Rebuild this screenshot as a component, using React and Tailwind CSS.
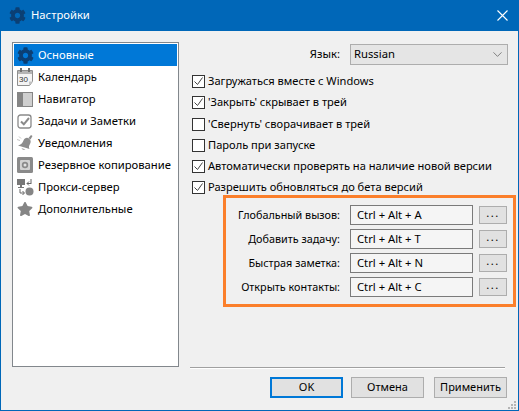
import React from "react";
import { FaCog, FaStar } from "react-icons/fa";
import { ChevronDown } from "lucide-react";

const CalendarIcon = () => (
  <svg width="16" height="18" viewBox="0 0 16 18">
    <path d="M0.5 2.5h15v11l-3 4H0.5z" fill="#f4f4f4" stroke="#8f8f8f" />
    <rect x="1" y="3" width="14" height="3" fill="#b5b5b5" />
    <rect x="3" y="0" width="2" height="4" fill="#6f6f6f" />
    <rect x="11" y="0" width="2" height="4" fill="#6f6f6f" />
    <text x="2" y="14" fontSize="8" fontFamily="Liberation Sans, sans-serif" fill="#333">30</text>
    <path d="M12 17.5v-4h3.5z" fill="#c4c4c4" />
  </svg>
);

const NavigatorIcon = () => (
  <svg width="16" height="15" viewBox="0 0 16 15">
    <rect width="16" height="15" fill="#858585" />
    <rect x="6" y="1" width="9" height="13" fill="#cfcfcf" />
  </svg>
);

const TasksIcon = () => (
  <svg width="16" height="16" viewBox="0 0 16 16">
    <rect x="1" y="2" width="13" height="13" rx="2.5" fill="#fff" stroke="#8a8a8a" strokeWidth="1.3" />
    <path d="M4 8.5l2.8 2.8L12 5" fill="none" stroke="#8a8a8a" strokeWidth="2" />
  </svg>
);

const BellIcon = () => (
  <svg width="16" height="16" viewBox="0 0 16 16">
    <path d="M1 10.5c3-.5 4.5-2.500 5.500-5C7.500 3 10 2 12 3.500c2 1.500 2 3.500 1 5.500-1 1.800-1.500 3.500-.5 5z" fill="#8c8c8c" />
    <path d="M11.500 3l2.500-3 1.500 1-2 3.500z" fill="#8c8c8c" />
    <path d="M4.500 13c.5 2 2.500 2.500 4 1.500z" fill="#a8a8a8" />
    <path d="M0 4.500l3 1M2 1.500l2 2" stroke="#c4c4c4" />
  </svg>
);

const BackupIcon = () => (
  <svg width="16" height="16" viewBox="0 0 16 16">
    <rect width="16" height="16" rx="1.500" fill="#8a8a8a" />
    <rect x="3" y="3" width="10" height="10" rx="1" fill="#d2d2d2" />
    <circle cx="8" cy="8" r="3.200" fill="#8a8a8a" />
    <circle cx="8" cy="8" r="1.500" fill="#e2e2e2" />
  </svg>
);

const ProxyIcon = () => (
  <svg width="17" height="17" viewBox="0 0 17 17">
    <rect x="0" y="0" width="8" height="6" fill="#777" />
    <rect x="3" y="6" width="2" height="2" fill="#777" />
    <rect x="1" y="8" width="6" height="1" fill="#777" />
    <circle cx="12.500" cy="12.500" r="4" fill="#858585" />
    <path d="M14 0v5M14 4.500H10M12 2.500l-2 2 2 2M3 10v4h4M5.500 12l2 2-2 2" fill="none" stroke="#666" />
  </svg>
);

const items = [
  { label: "Основные", icon: <FaCog size={17} color="#0b3f74" />, active: true },
  { label: "Календарь", icon: <CalendarIcon /> },
  { label: "Навигатор", icon: <NavigatorIcon /> },
  { label: "Задачи и Заметки", icon: <TasksIcon /> },
  { label: "Уведомления", icon: <BellIcon /> },
  { label: "Резервное копирование", icon: <BackupIcon /> },
  { label: "Прокси-сервер", icon: <ProxyIcon /> },
  { label: "Дополнительные", icon: <FaStar size={16} color="#858585" /> },
];

const options = [
  { label: "Загружаться вместе с Windows", checked: true, h: "h-[21px]" },
  { label: "'Закрыть' скрывает в трей", checked: true, h: "h-[21px]" },
  { label: "'Свернуть' сворачивает в трей", checked: false, h: "h-[22px]" },
  { label: "Пароль при запуске", checked: false, h: "h-[21px]" },
  { label: "Автоматически проверять на наличие новой версии", checked: true, h: "h-[21px]" },
  { label: "Разрешить обновляться до бета версий", checked: true, h: "h-[21px]" },
];

const hotkeys = [
  { label: "Глобальный вызов:", keys: "Ctrl + Alt + A" },
  { label: "Добавить задачу:", keys: "Ctrl + Alt + T" },
  { label: "Быстрая заметка:", keys: "Ctrl + Alt + N" },
  { label: "Открыть контакты:", keys: "Ctrl + Alt + C" },
];

const Checkbox = ({ checked }) => (
  <span className="w-[13px] h-[13px] border border-[#333] bg-white flex items-center justify-center shrink-0">
    {checked && (
      <svg width="11" height="11" viewBox="0 0 11 11">
        <path d="M1.500 5.500l3 3 5-7" fill="none" stroke="#444" strokeWidth="1" />
      </svg>
    )}
  </span>
);

const DialogButton = ({ children, primary, className = "" }) => (
  <button
    className={
      "h-[21px] w-[73px] bg-[#e1e1e1] text-black text-[11px] " +
      (primary ? "border-2 border-[#0078d7] " : "border border-[#adadad] ") +
      className
    }
  >
    {children}
  </button>
);

export default function App() {
  return (
    <div
      className="relative w-[519px] h-[411px] flex flex-col bg-[#f0f0f0] border border-[#0067b8] border-t-0 text-[11.25px] text-black overflow-hidden"
      style={{ fontFamily: '"Noto Sans", "DejaVu Sans", sans-serif' }}
    >
      <div className="h-[31px] shrink-0 bg-[#0067b8] flex items-center pl-[8px] pr-[10px] text-white">
        <FaCog size={17} color="#0b3f74" />
        <span className="ml-[5px]">Настройки</span>
        <svg className="ml-auto" width="11" height="11" viewBox="0 0 11 11">
          <path d="M0.500 0.500l10 10M10.500 0.500l-10 10" stroke="#fff" strokeWidth="1.100" />
        </svg>
      </div>

      <div className="flex-1 flex pl-[11px] pt-[11px] pr-[10px] min-h-0">
        <div className="w-[167px] h-[325px] shrink-0 bg-white border border-[#82878c] p-[1px]">
          {items.map((item) => (
            <div
              key={item.label}
              className={"h-[22px] flex items-center " + (item.active ? "bg-[#0078d7] text-white" : "text-black")}
            >
              <span className="w-[22px] mr-[2px] flex items-center justify-center shrink-0">{item.icon}</span>
              <span className="whitespace-nowrap">{item.label}</span>
            </div>
          ))}
        </div>

        <div className="flex-1 flex flex-col pl-[13px] min-w-0">
          <div className="flex items-center justify-end pt-[2px] pb-[6px]">
            <span>Язык:</span>
            <div className="w-[158px] h-[21px] ml-[10px] bg-[#e5e5e5] border border-[#adadad] flex items-center justify-between pl-[3px] pr-[2px]">
              <span>Russian</span>
              <ChevronDown size={15} strokeWidth={1} color="#444" />
            </div>
          </div>

          {options.map((opt) => (
            <div key={opt.label} className={"flex items-center gap-[3px] whitespace-nowrap text-[11.1px] " + opt.h}>
              <Checkbox checked={opt.checked} />
              <span>{opt.label}</span>
            </div>
          ))}

          <div className="mt-[-3px] ml-[31px] mr-[-8px] h-[112px] border-[3px] border-[#fb7f2b] pt-[7px] flex flex-col gap-[4px]">
            {hotkeys.map((row) => (
              <div key={row.label} className="flex items-center h-[20px]">
                <span className="w-[114px] text-right whitespace-nowrap text-[10.8px]">{row.label}</span>
                <div className="w-[123px] h-[20px] ml-[10px] bg-[#f5f5f5] border border-[#7a7a7a] flex items-center pl-[6px]">
                  {row.keys}
                </div>
                <button className="w-[28px] h-[18px] ml-[6px] bg-[#e1e1e1] border border-[#adadad] leading-none pb-[4px] tracking-[1.5px]">
                  ...
                </button>
              </div>
            ))}
          </div>
        </div>
      </div>

      <div className="shrink-0 ml-[189px] mr-[13px] h-[2px] border-t border-[#a0a0a0] bg-white" />
      <div className="h-[41px] shrink-0 flex items-start justify-end pt-[8px] pr-[11px]">
        <DialogButton primary>OK</DialogButton>
        <DialogButton className="ml-[8px]">Отмена</DialogButton>
        <DialogButton className="ml-[10px]">Применить</DialogButton>
      </div>

      <svg className="absolute right-[2px] bottom-[1px]" width="8" height="8" viewBox="0 0 8 8">
        <path d="M6 0h2v2H6zM3 3h2v2H3zM6 3h2v2H6zM0 6h2v2H0zM3 6h2v2H3zM6 6h2v2H6z" fill="#b5b5b5" />
      </svg>
    </div>
  );
}
